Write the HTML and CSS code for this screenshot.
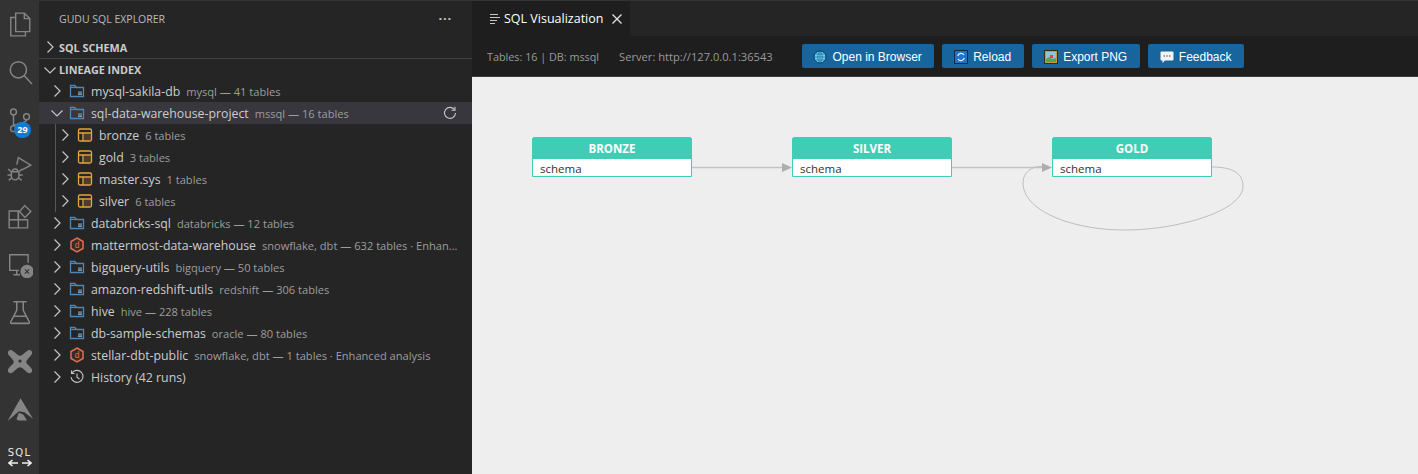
FILE: index.html
```html
<!DOCTYPE html>
<html lang="en">
<head>
<meta charset="utf-8">
<title>SQL Visualization</title>
<link rel="stylesheet" href="styles.css">
</head>
<body>
<svg class="defs" width="0" height="0">
  <defs>
    <symbol id="chev-r" viewBox="0 0 16 16"><path d="M5.500 2.500 11 8l-5.500 5.500" fill="none" stroke="currentColor" stroke-width="1.200"/></symbol>
    <symbol id="chev-d" viewBox="0 0 16 16"><path d="M2.500 5.500 8 11l5.500-5.500" fill="none" stroke="currentColor" stroke-width="1.200"/></symbol>
    <symbol id="folder" viewBox="0 0 16 16"><path d="M1.500 2.500h4.300l1.700 2h7v9h-13z" fill="none" stroke="#4f86b5" stroke-width="1.300"/><path d="M7.500 4.500H1.500" stroke="#4f86b5" stroke-width="1.200"/><rect x="9" y="8.500" width="4" height="3.500" fill="#7c99b3"/><path d="M9 10h4" stroke="#252526" stroke-width=".6"/></symbol>
    <symbol id="table" viewBox="0 0 16 16"><rect x="1.500" y="2" width="13" height="12" rx="1.500" fill="none" stroke="#e8a33d" stroke-width="1.300"/><path d="M1.500 6h13M6 6v8" stroke="#e8a33d" stroke-width="1.300" fill="none"/><rect x="7" y="7" width="7" height="6.500" fill="#e8a33d" opacity=".2"/></symbol>
    <symbol id="dbt" viewBox="0 0 16 16"><path d="M8 1l6 3.500v7L8 15l-6-3.500v-7z" fill="#3a2a26" stroke="#e2704f" stroke-width="1.500"/><text x="8" y="11" font-size="8.500" text-anchor="middle" fill="#e2704f" font-family="Liberation Sans">d</text></symbol>
    <symbol id="history" viewBox="0 0 16 16"><path d="M2.800 4.300A6 6 0 1 1 2 8" fill="none" stroke="#c5c5c5" stroke-width="1.100"/><path d="M2.500 1.500v3h3M8 4.500V8.300l2.500 1.700" fill="none" stroke="#c5c5c5" stroke-width="1.100"/></symbol>
  </defs>
</svg>
<div class="app">
  <nav class="activity">
    <div class="act-item"><svg width="26" height="26" viewBox="0 0 24 24" fill="none" stroke="#858585" stroke-width="1.300"><path d="M8 2h8l5 5v12H8z"/><path d="M16 2v5h5"/><path d="M8 6H3.500v17H17v-4"/></svg></div>
    <div class="act-item"><svg width="26" height="26" viewBox="0 0 24 24" fill="none" stroke="#858585" stroke-width="1.400"><circle cx="10.500" cy="10" r="7.500"/><path d="M16 15.500 23 23"/></svg></div>
    <div class="act-item"><svg width="26" height="26" viewBox="0 0 24 24" fill="none" stroke="#858585" stroke-width="1.300"><circle cx="6" cy="4.500" r="2.700"/><circle cx="6" cy="20" r="2.700"/><circle cx="18" cy="9" r="2.700"/><path d="M6 7.200v10.100M18 11.700c0 3.500-9 3-12 5.500"/></svg><span class="badge">29</span></div>
    <div class="act-item"><svg class="shift-2" width="26" height="26" viewBox="0 0 24 24" fill="none" stroke="#858585" stroke-width="1.300"><path d="M9 8 10.500 1.500 22 8.500 13.500 13"/><path d="M4 14.500h7v4a3.500 3.500 0 0 1-7 0z"/><path d="M5 14.500a2.500 2.500 0 0 1 5 0M1 12l3 2.500M.5 17.500H4M1.500 22.500 4.500 20M14 12l-3 2.500M14.500 17.500H11M13.500 22.500 10.500 20"/></svg></div>
    <div class="act-item"><svg class="shift-2" width="26" height="26" viewBox="0 0 24 24" fill="none" stroke="#858585" stroke-width="1.300"><path d="M2 6.500h8.500V22H2zM2 14.500h17V22h-8.500"/><path d="M10.500 14.500V6.500"/><path d="M16.500 1.500l5.500 5.500-5.500 5.500-5-5.500z"/></svg></div>
    <div class="act-item"><svg class="shift-2" width="26" height="26" viewBox="0 0 24 24" fill="none" stroke="#858585" stroke-width="1.300"><path d="M11 17H2.500V2.500h17V10M6 21h6M9 17v4"/><circle cx="18.500" cy="18" r="5.500" fill="#858585"/><path d="M16.500 16l4 4M20.500 16l-4 4" stroke="#333" stroke-width="1"/></svg></div>
    <div class="act-item"><svg width="26" height="26" viewBox="0 0 24 24" fill="none" stroke="#858585" stroke-width="1.400"><path d="M6 2.500h12M9 2.500v8L3.500 21c-.4 1 0 1.500 1 1.500h15c1 0 1.400-.5 1-1.500L15 10.500v-8M6.500 16h11"/></svg></div>
    <div class="act-item"><svg class="shift-2" width="26" height="26" viewBox="0 0 24 24" fill="#858585"><path d="M1.500 2.500c2-1.500 3.500-.5 5.500 1.500l3 2.500c1.500 1 2.500 1 4 0l3-2.500c2-2 3.500-3 5.500-1.500 1.500 2 .5 3.500-1.500 5.500l-2.500 3c-1 1.500-1 2 0 3.500l2.500 2.500c2 2 3 3.500 1.500 5.500-2 1.500-3.500.5-5.500-1.500l-3-2.500c-1.500-1-2.500-1-4 0l-3 2.500c-2 2-3.500 3-5.500 1.500-1.500-2-.5-3.500 1.500-5.500l2.500-2.500c1-1.500 1-2 0-3.500l-2.500-3C1 6 0 4.500 1.500 2.500z"/><circle cx="12" cy="12" r="1.500" fill="#333"/></svg></div>
    <div class="act-item"><svg class="shift-2" width="26" height="26" viewBox="0 0 24 24" fill="#858585"><path d="M12.500 2 24 21l-8-6-5-1-10.500 9z"/><path d="M11 15.500 15 17l3.500 5.500H11c-1.500 0-2.500-1-2-2z"/></svg></div>
    <div class="act-sql"><span class="sql-word">SQL</span><svg width="24" height="8" viewBox="0 0 24 8" fill="none" stroke="#f0f0f0" stroke-width="1.600"><path d="M1 4h9M4.500 1 1 4l3.500 3M14 4h9M19.500 1 23 4l-3.500 3"/></svg></div>
  </nav>

  <aside class="sidebar">
    <header class="side-title">
      <span>GUDU SQL EXPLORER</span>
      <span class="more">&middot;&middot;&middot;</span>
    </header>
    <div class="section-head section-schema"><svg class="chev"><use href="#chev-r"/></svg>SQL SCHEMA</div>
    <div class="section-head section-lineage"><svg class="chev"><use href="#chev-d"/></svg>LINEAGE INDEX</div>
    <ul class="tree">
      <li class="row"><svg class="chev"><use href="#chev-r"/></svg><svg class="ico"><use href="#folder"/></svg><span class="name">mysql-sakila-db</span><span class="desc">mysql — 41 tables</span></li>
      <li class="row row-selected"><svg class="chev"><use href="#chev-d"/></svg><svg class="ico"><use href="#folder"/></svg><span class="name">sql-data-warehouse-project</span><span class="desc">mssql — 16 tables</span>
        <svg class="refresh" width="16" height="16" viewBox="0 0 16 16" fill="none" stroke="#c5c5c5" stroke-width="1.100"><path d="M12.700 5A5.500 5.500 0 1 0 13.500 8"/><path d="M13 1.800V5.300H9.500"/></svg></li>
      <li>
        <ul class="children">
          <li class="row row-child"><svg class="chev"><use href="#chev-r"/></svg><svg class="ico"><use href="#table"/></svg><span class="name">bronze</span><span class="desc">6 tables</span></li>
          <li class="row row-child"><svg class="chev"><use href="#chev-r"/></svg><svg class="ico"><use href="#table"/></svg><span class="name">gold</span><span class="desc">3 tables</span></li>
          <li class="row row-child"><svg class="chev"><use href="#chev-r"/></svg><svg class="ico"><use href="#table"/></svg><span class="name">master.sys</span><span class="desc">1 tables</span></li>
          <li class="row row-child"><svg class="chev"><use href="#chev-r"/></svg><svg class="ico"><use href="#table"/></svg><span class="name">silver</span><span class="desc">6 tables</span></li>
        </ul>
      </li>
      <li class="row"><svg class="chev"><use href="#chev-r"/></svg><svg class="ico"><use href="#folder"/></svg><span class="name">databricks-sql</span><span class="desc">databricks — 12 tables</span></li>
      <li class="row"><svg class="chev"><use href="#chev-r"/></svg><svg class="ico"><use href="#dbt"/></svg><span class="name">mattermost-data-warehouse</span><span class="desc">snowflake, dbt — 632 tables · Enhan...</span></li>
      <li class="row"><svg class="chev"><use href="#chev-r"/></svg><svg class="ico"><use href="#folder"/></svg><span class="name">bigquery-utils</span><span class="desc">bigquery — 50 tables</span></li>
      <li class="row"><svg class="chev"><use href="#chev-r"/></svg><svg class="ico"><use href="#folder"/></svg><span class="name">amazon-redshift-utils</span><span class="desc">redshift — 306 tables</span></li>
      <li class="row"><svg class="chev"><use href="#chev-r"/></svg><svg class="ico"><use href="#folder"/></svg><span class="name">hive</span><span class="desc">hive — 228 tables</span></li>
      <li class="row"><svg class="chev"><use href="#chev-r"/></svg><svg class="ico"><use href="#folder"/></svg><span class="name">db-sample-schemas</span><span class="desc">oracle — 80 tables</span></li>
      <li class="row"><svg class="chev"><use href="#chev-r"/></svg><svg class="ico"><use href="#dbt"/></svg><span class="name">stellar-dbt-public</span><span class="desc">snowflake, dbt — 1 tables · Enhanced analysis</span></li>
      <li class="row"><svg class="chev"><use href="#chev-r"/></svg><svg class="ico"><use href="#history"/></svg><span class="name">History (42 runs)</span></li>
    </ul>
  </aside>

  <main class="editor">
    <div class="tabs">
      <div class="tab">
        <svg width="11" height="14" viewBox="0 0 11 14" stroke="#c5c5c5" stroke-width="1.200"><path d="M1 2.500h8M1 5.500h10M1 8.500h7M1 11.500h5"/></svg>
        <span class="tab-label">SQL Visualization</span>
        <svg class="tab-close" width="12" height="12" viewBox="0 0 12 12" stroke="#e6e6e6" stroke-width="1.300"><path d="M1.500 1.500l9 9M10.500 1.500l-9 9"/></svg>
      </div>
    </div>
    <div class="toolbar">
      <span class="stat">Tables: 16 | DB: mssql</span>
      <span class="stat stat-server">Server: http://127.0.0.1:36543</span>
      <button class="btn btn-open"><svg width="14" height="14" viewBox="0 0 14 14"><circle cx="7" cy="7" r="6" fill="#6fd0f5" stroke="#0d3a55"/><path d="M1 7h12M7 1v12M2.500 4h9M2.500 10h9M7 1c-3 3-3 9 0 12M7 1c3 3 3 9 0 12" fill="none" stroke="#146a99" stroke-width=".7"/></svg>Open in Browser</button>
      <button class="btn btn-reload"><svg width="14" height="14" viewBox="0 0 14 14"><rect x=".5" y=".5" width="13" height="13" fill="#1f74c9" stroke="#0c2c4a"/><path d="M3.700 6A3.500 3.500 0 0 1 10 5M10.300 8A3.500 3.500 0 0 1 4 9" fill="none" stroke="#e8f6ff" stroke-width="1.200"/></svg>Reload</button>
      <button class="btn btn-export"><svg width="14" height="14" viewBox="0 0 14 14"><rect x=".5" y=".5" width="13" height="13" fill="#c79a3a" stroke="#3a2a10"/><rect x="2" y="2" width="10" height="10" fill="#8fc4dd"/><path d="M2 12V9l3-2 3 2 4-1v4z" fill="#5da04f"/><rect x="6" y="5" width="3" height="3" fill="#c8503c"/></svg>Export PNG</button>
      <button class="btn btn-feedback"><svg width="14" height="14" viewBox="0 0 14 14"><path d="M1.500 1.500h11a1 1 0 0 1 1 1v7a1 1 0 0 1-1 1H5L2.500 13v-2.500h-1a1 1 0 0 1-1-1v-7a1 1 0 0 1 1-1z" fill="#f4f4f4"/><path d="M3.500 6h1.500M6.300 6h1.500M9 6h1.500" stroke="#444" stroke-width="1.200"/></svg>Feedback</button>
    </div>
    <div class="canvas">
      <div class="nodes">
        <div class="node"><div class="node-head">BRONZE</div><div class="node-body">schema</div></div>
        <div class="node"><div class="node-head">SILVER</div><div class="node-body">schema</div></div>
        <div class="node"><div class="node-head">GOLD</div><div class="node-body">schema</div></div>
      </div>
      <svg class="edges" width="946" height="397" viewBox="472 77 946 397" fill="none">
        <path d="M692 167.500H782M952 167.500H1042" stroke="#c4c4c4" stroke-width="1.500"/>
        <path d="M1212 167C1232 167 1243 173 1243 186C1243 212 1175 230 1125 230C1070 230 1023 210 1023 183C1023 172 1032 166 1042 166.500" stroke="#bdbdbd" stroke-width="1"/>
        <path d="M782 163l10 4.500-10 4.500zM1042 163l10 4.500-10 4.500z" fill="#aeaeae"/>
      </svg>
    </div>
  </main>
</div>
</body>
</html>
```
FILE: styles.css
```css
* { box-sizing: border-box; }
html, body { margin: 0; padding: 0; height: 100%; overflow: hidden; }
body { font-family: "Open Sans", "Noto Sans", sans-serif; background: #1e1e1e; }
.defs { position: absolute; }
ul { list-style: none; margin: 0; padding: 0; }
.app { display: flex; height: 474px; width: 1418px; }

.activity { width: 39px; flex: none; background: #333333; display: flex; flex-direction: column; align-items: center; }
.act-item { height: 48px; width: 100%; flex: none; display: flex; align-items: center; justify-content: center; position: relative; }
.shift-2 { margin-top: 2px; }
.badge { position: absolute; left: 14px; top: 26px; min-width: 17px; height: 16px; border-radius: 8px; background: #0c7cd5; color: #fff; font: 700 9px/16px "Open Sans", sans-serif; text-align: center; }
.act-sql { margin-top: 15px; display: flex; flex-direction: column; align-items: center; color: #e8e8e8; line-height: 1; }
.sql-word { font: 10px/12px "DejaVu Sans", sans-serif; letter-spacing: 1.300px; }

.sidebar { width: 433px; flex: none; background: #252526; color: #cccccc; font-size: 13px; }
.side-title { height: 36px; padding: 0 20px; display: flex; align-items: center; justify-content: space-between; font-size: 10.500px; color: #bbbbbb; border-top: 1px solid #333; }
.more { font-size: 13px; font-weight: 700; letter-spacing: .8px; color: #c5c5c5; line-height: 1; }
.section-head { display: flex; align-items: center; font-size: 10.800px; font-weight: 700; color: #cccccc; padding-left: 3px; }
.section-schema { height: 23px; border-bottom: 1px solid #414141; }
.section-lineage { height: 21px; }
.chev { width: 16px; height: 16px; flex: none; margin-right: 1px; color: #c5c5c5; }
.row { height: 22px; display: flex; align-items: center; padding-left: 10px; position: relative; white-space: nowrap; }
.row-selected { background: #37373d; }
.row-child { padding-left: 18px; }
.children { position: relative; }
.children::before { content: ""; position: absolute; left: 16px; top: 0; bottom: 0; width: 1px; background: #585858; }
.row .chev { margin-right: 4px; }
.ico { width: 16px; height: 16px; flex: none; margin-right: 6px; }
.name { color: #cccccc; font-size: 12.300px; line-height: 22px; padding-top: 1px; }
.desc { color: #9d9d9d; font-size: 11.100px; line-height: 22px; padding-top: 1px; margin-left: 6px; }
.refresh { position: absolute; right: 14px; top: 3px; }

.editor { flex: 1; display: flex; flex-direction: column; min-width: 0; }
.tabs { height: 36px; background: #252526; flex: none; display: flex; border-top: 1px solid #333; }
.tab { width: 158px; background: #1e1e1e; display: flex; align-items: center; padding-left: 17px; color: #ffffff; font-size: 12.500px; }
.tab-label { margin-left: 4px; }
.tab-close { margin-left: 8px; }
.toolbar { height: 41px; flex: none; background: #1e1e1e; border-bottom: 1px solid #3a3a3a; display: flex; align-items: center; padding-left: 15px; }
.stat { font-size: 10.800px; color: #9a9a9a; padding-top: 1px; }
.stat-server { font-size: 11.150px; margin-left: 20px; margin-right: 29px; }
.btn { height: 24px; border: 0; border-radius: 2px; background: #17659c; color: #ffffff; font: 12px "Liberation Sans", sans-serif; display: flex; align-items: center; justify-content: center; gap: 5px; margin-right: 8px; padding: 1px 0 0; }
.btn-open { width: 132px; }
.btn-reload { width: 82px; }
.btn-export { width: 108px; }
.btn-feedback { width: 96px; }

.canvas { flex: 1; background: #eeeeee; position: relative; overflow: hidden; }
.nodes { display: flex; gap: 100px; padding: 60px 0 0 60px; }
.node { width: 160px; height: 40px; border: 1px solid #3fcdb5; border-radius: 3px 3px 0 0; background: #fff; display: flex; flex-direction: column; }
.node-head { height: 22px; margin: -1px -1px 0; background: #3fcdb5; color: #fff; font: 700 11.500px/24px "Open Sans", sans-serif; text-align: center; border-radius: 3px 3px 0 0; }
.node-body { padding-left: 7px; font: 11.500px/20px "Open Sans", sans-serif; color: #333; }
.edges { position: absolute; left: 0; top: 0; }
```
